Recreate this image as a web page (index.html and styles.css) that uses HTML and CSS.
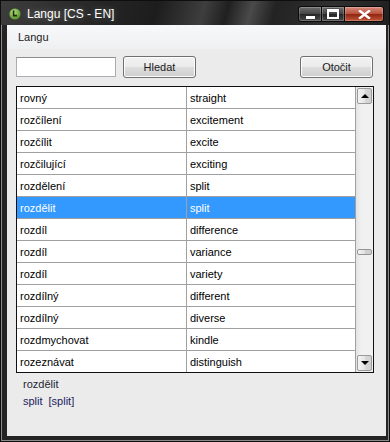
FILE: index.html
```html
<!DOCTYPE html>
<html>
<head>
<title>Langu [CS - EN]</title>
<link rel="stylesheet" href="styles.css">
</head>
<body>

<div class="window">
  <div class="titlebar">
    <svg class="appicon" width="12" height="12" viewBox="0 0 12 12">
      <defs>
        <radialGradient id="g" cx="40%" cy="35%" r="70%">
          <stop offset="0" stop-color="#b6e07a"/>
          <stop offset="1" stop-color="#4f8a25"/>
        </radialGradient>
      </defs>
      <circle cx="6" cy="6" r="5.6" fill="url(#g)"/>
      <polyline points="4.6,2.6 4.6,7.6 8,7.6" fill="none" stroke="#1f2a14" stroke-width="1.6"/>
    </svg>
    <span class="title">Langu [CS - EN]</span>
    <div class="captions">
      <div class="cbtn min"><span></span></div>
      <div class="cbtn max"><span></span></div>
      <div class="cbtn close">
        <svg width="13" height="9" viewBox="0 0 13 9">
          <path d="M2 1 L11 8 M11 1 L2 8" stroke="#fff" stroke-width="2.4" stroke-linecap="square"/>
        </svg>
      </div>
    </div>
  </div>

  <div class="client">
    <div class="menubar"><span>Langu</span></div>

    <div class="toolbar">
      <input type="text" class="search">
      <button class="btn">Hledat</button>
      <div class="spacer"></div>
      <button class="btn">Otočit</button>
    </div>

    <div class="list">
      <div class="rows">
        <div class="row"><div class="cell">rovný</div><div class="cell">straight</div></div>
        <div class="row"><div class="cell">rozčílení</div><div class="cell">excitement</div></div>
        <div class="row"><div class="cell">rozčílit</div><div class="cell">excite</div></div>
        <div class="row"><div class="cell">rozčilující</div><div class="cell">exciting</div></div>
        <div class="row"><div class="cell">rozdělení</div><div class="cell">split</div></div>
        <div class="row selected"><div class="cell">rozdělit</div><div class="cell">split</div></div>
        <div class="row"><div class="cell">rozdíl</div><div class="cell">difference</div></div>
        <div class="row"><div class="cell">rozdíl</div><div class="cell">variance</div></div>
        <div class="row"><div class="cell">rozdíl</div><div class="cell">variety</div></div>
        <div class="row"><div class="cell">rozdílný</div><div class="cell">different</div></div>
        <div class="row"><div class="cell">rozdílný</div><div class="cell">diverse</div></div>
        <div class="row"><div class="cell">rozdmychovat</div><div class="cell">kindle</div></div>
        <div class="row last"><div class="cell">rozeznávat</div><div class="cell">distinguish</div></div>
      </div>
      <div class="scrollbar">
        <div class="sbtn"><span class="arrow up"></span></div>
        <div class="track"><div class="thumb"></div></div>
        <div class="sbtn"><span class="arrow down"></span></div>
      </div>
    </div>

    <div class="detail">
      <div class="word">rozdělit</div>
      <div class="trans">split<span class="pron">[split]</span></div>
    </div>
  </div>
</div>

</body>
</html>
```

FILE: styles.css
```css
body { margin: 0; font-family: "Liberation Sans", Arial, sans-serif; font-size: 11px; background: #fff; }

.window { width: 390px; height: 442px; box-sizing: border-box; background: #242424; border: 1px solid #0e0e0e; box-shadow: inset 0 0 0 1px #8a8a8a; display: flex; flex-direction: column; overflow: hidden; }

.titlebar { height: 24px; display: flex; align-items: center; padding-left: 8px; position: relative;
  background: linear-gradient(105deg, #3d3d3d 0%, #262626 25%, #1d1d1d 40%, #3e3e3e 52%, #202020 58%, #4a4a4a 64%, #232323 70%, #303030 85%, #1f1f1f 100%); }
.appicon { display: block; margin-top: 2px; }
.title { margin-left: 6px; margin-top: 2px; color: #fff; font-size: 12px; text-shadow: 0 0 6px rgba(255,255,255,0.35); }

.captions { position: absolute; right: 5px; top: 5px; display: flex; }
.cbtn { height: 16px; box-sizing: border-box; border: 1px solid #0a0a0a; display: flex; align-items: center; justify-content: center;
  background: linear-gradient(#6e6e6e, #444 50%, #262626 51%, #4a4a4a 100%); box-shadow: inset 0 0 0 1px rgba(255,255,255,0.22); }
.cbtn.min { width: 24px; border-radius: 3px 0 0 3px; }
.cbtn.max { width: 24px; margin-left: -1px; }
.cbtn.close { width: 40px; margin-left: -1px; border-radius: 0 3px 3px 0;
  background: linear-gradient(#d98a7c, #b6503c 50%, #8f2410 51%, #c0563a 100%); }
.cbtn.min span { width: 9px; height: 3px; background: #fff; margin-top: 6px; box-shadow: 0 0 1px #000; }
.cbtn.max span { width: 8px; height: 5px; border: 2px solid #fff; border-top-width: 3px; box-sizing: content-box; box-shadow: 0 0 1px #000; }

.client { flex: 1; margin: 0 3px 5px 6px; background: #ebebeb; display: flex; flex-direction: column; }

.menubar { height: 24px; display: flex; align-items: center; padding-left: 11px; background: linear-gradient(#f7f8f9, #eef0f2); color: #1a1a1a; }

.toolbar { display: flex; align-items: center; padding: 7px 13px 0 9px; height: 22px; }
.search { width: 100px; height: 20px; box-sizing: border-box; border: 1px solid #abadb3; border-top-color: #8e8f8f; background: #fff; margin: 0; padding: 0 2px; }
.btn { width: 73px; height: 22px; margin: 0 0 0 7px; padding: 0; font-family: "Liberation Sans", Arial, sans-serif; font-size: 11px; font-weight: normal; color: #1a1a1a;
  border: 1px solid #707070; border-radius: 3px; background: linear-gradient(#f2f2f2, #ebebeb 50%, #dddddd 51%, #cfcfcf); box-shadow: inset 0 0 0 1px #fcfcfc; }
.spacer { flex: 1; }

.list { margin: 8px 0 0 9px; width: 358px; height: 287px; box-sizing: border-box; border: 1px solid #101010; display: flex; background: #fff; }
.rows { width: 339px; overflow: hidden; }
.row { display: flex; height: 22px; box-sizing: border-box; border-bottom: 1px solid #a0a0a0; }
.row.last { border-bottom: 0; height: 21px; }
.cell { box-sizing: border-box; border-right: 1px solid #a0a0a0; padding-left: 3px; display: flex; align-items: center; color: #000; }
.cell:first-child { width: 170px; }
.cell:last-child { width: 169px; }
.row.selected .cell { background: #3399ff; color: #fff; }

.scrollbar { width: 17px; background: linear-gradient(90deg, #e3e3e3, #f1f1f1 30%, #f1f1f1); display: flex; flex-direction: column; align-items: center; padding: 1px 0; box-sizing: border-box; }
.sbtn { width: 15px; height: 16px; box-sizing: border-box; border: 1px solid #9a9a9a; border-radius: 2px; background: linear-gradient(90deg, #f3f3f3, #e6e6e6 50%, #d9d9d9 51%, #d0d0d0); display: flex; align-items: center; justify-content: center; }
.arrow { width: 0; height: 0; border-left: 4px solid transparent; border-right: 4px solid transparent; }
.arrow.up { border-bottom: 4px solid #000; }
.arrow.down { border-top: 4px solid #000; }
.track { flex: 1; width: 100%; position: relative; }
.thumb { position: absolute; left: 1px; top: 145px; width: 15px; height: 6px; box-sizing: border-box; border: 1px solid #959595; border-radius: 2px; background: linear-gradient(90deg, #f5f5f5, #e2e2e2 50%, #d2d2d2 51%, #cfcfcf); }

.detail { padding: 4px 0 0 16px; }
.word { height: 15px; line-height: 15px; color: #1e1e30; }
.trans { height: 15px; line-height: 15px; margin-top: 2px; color: #1c1c5c; }
.pron { margin-left: 6px; }
```
